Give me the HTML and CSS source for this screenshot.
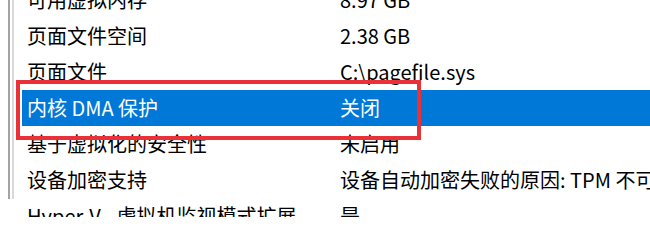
FILE: index.html
```html
<!DOCTYPE html>
<html lang="zh-CN">
<head>
<meta charset="utf-8">
<title>系统信息</title>
<link rel="stylesheet" href="styles.css">
</head>
<body>
<div class="pane">
  <div class="inner">
    <div class="list">
      <div class="row"><span class="name">可用虚拟内存</span><span class="value">8.97 GB</span></div>
      <div class="row"><span class="name">页面文件空间</span><span class="value">2.38 GB</span></div>
      <div class="row"><span class="name">页面文件</span><span class="value">C:\pagefile.sys</span></div>
      <div class="row selected"><span class="name">内核 DMA 保护</span><span class="value">关闭</span></div>
      <div class="row"><span class="name">基于虚拟化的安全性</span><span class="value">未启用</span></div>
      <div class="row"><span class="name">设备加密支持</span><span class="value">设备自动加密失败的原因: TPM 不可用, 不允许使用 PCR7 绑定</span></div>
      <div class="row"><span class="name">Hyper-V - 虚拟机监视模式扩展</span><span class="value">是</span></div>
    </div>
  </div>
</div>
<div class="highlight-box"></div>
</body>
</html>
```

FILE: styles.css
```css
html, body {
  margin: 0;
  padding: 0;
  background: #ffffff;
  width: 650px;
  height: 217px;
  overflow: hidden;
}

body {
  position: relative;
  font-family: "Noto Sans CJK SC", "Microsoft YaHei", sans-serif;
  font-size: 20px;
  color: #000000;
}

.pane {
  margin-left: 8px;
  border-left: 2px solid #a3a3a3;
  padding-left: 2px;
  height: 217px;
}

.inner {
  border-left: 2px solid #d9d9d9;
  height: 217px;
}

.list {
  margin-top: -18px;
  padding-left: 8px;
}

.row {
  display: flex;
  height: 36px;
  line-height: 36px;
  white-space: nowrap;
  overflow: hidden;
}

.name {
  flex: 0 0 313px;
  padding-left: 5px;
}

.value {
  flex: 1 1 auto;
  overflow: hidden;
}

.row.selected {
  background: #0078d7;
  color: #ffffff;
}

.highlight-box {
  position: absolute;
  left: 16px;
  top: 80px;
  width: 397px;
  height: 52px;
  border: 4px solid #ea3138;
}
```
